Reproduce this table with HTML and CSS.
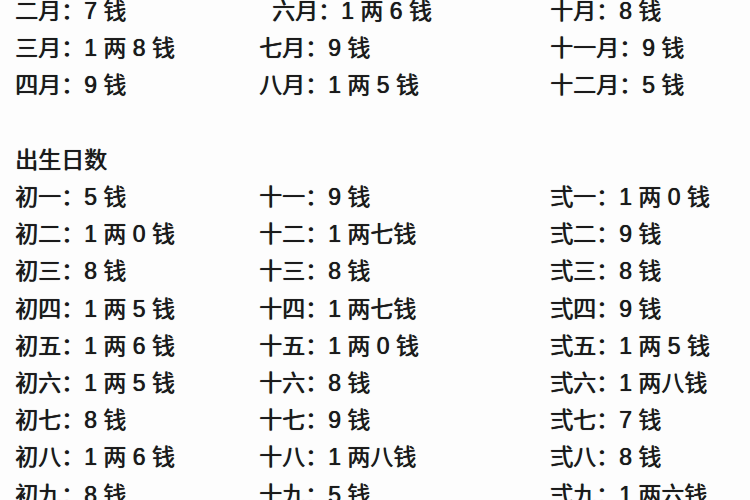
FILE: index.html
```html
<!DOCTYPE html>
<html lang="zh-CN">
<head>
<meta charset="utf-8">
<title>月份与日数</title>
<link rel="stylesheet" href="styles.css">
</head>
<body>
<div class="page">
  <div class="table">
    <div class="cell">二月：7 钱</div>
    <div class="cell indent">六月：1 两 6 钱</div>
    <div class="cell">十月：8 钱</div>
    <div class="cell">三月：1 两 8 钱</div>
    <div class="cell">七月：9 钱</div>
    <div class="cell">十一月：9 钱</div>
    <div class="cell">四月：9 钱</div>
    <div class="cell">八月：1 两 5 钱</div>
    <div class="cell">十二月：5 钱</div>
  </div>
  <div class="spacer"></div>
  <div class="heading">出生日数</div>
  <div class="table">
    <div class="cell">初一：5 钱</div>
    <div class="cell">十一：9 钱</div>
    <div class="cell">弍一：1 两 0 钱</div>
    <div class="cell">初二：1 两 0 钱</div>
    <div class="cell">十二：1 两七钱</div>
    <div class="cell">弍二：9 钱</div>
    <div class="cell">初三：8 钱</div>
    <div class="cell">十三：8 钱</div>
    <div class="cell">弍三：8 钱</div>
    <div class="cell">初四：1 两 5 钱</div>
    <div class="cell">十四：1 两七钱</div>
    <div class="cell">弍四：9 钱</div>
    <div class="cell">初五：1 两 6 钱</div>
    <div class="cell">十五：1 两 0 钱</div>
    <div class="cell">弍五：1 两 5 钱</div>
    <div class="cell">初六：1 两 5 钱</div>
    <div class="cell">十六：8 钱</div>
    <div class="cell">弍六：1 两八钱</div>
    <div class="cell">初七：8 钱</div>
    <div class="cell">十七：9 钱</div>
    <div class="cell">弍七：7 钱</div>
    <div class="cell">初八：1 两 6 钱</div>
    <div class="cell">十八：1 两八钱</div>
    <div class="cell">弍八：8 钱</div>
    <div class="cell">初九：8 钱</div>
    <div class="cell">十九：5 钱</div>
    <div class="cell">弍九：1 两六钱</div>
  </div>
</div>
</body>
</html>
```
FILE: styles.css
```css
html, body {
  margin: 0;
  padding: 0;
  background: #fdfdfd;
  overflow: hidden;
}
.page {
  width: 750px;
  height: 500px;
  overflow: hidden;
  font-family: "Liberation Sans", "Noto Sans CJK SC", sans-serif;
  font-size: 23px;
  line-height: 37.2px;
  color: #1a1a1a;
  text-shadow: 0.4px 0 0 #1a1a1a, 0 0 1px rgba(0, 0, 0, 0.45);
  padding-left: 15px;
  box-sizing: border-box;
}
.table {
  display: grid;
  grid-template-columns: 244px 291px 1fr;
}
.table:first-child {
  margin-top: -7px;
}
.cell {
  white-space: nowrap;
}
.indent {
  padding-left: 13px;
}
.spacer {
  height: 37.2px;
}
.heading {
  height: 37.2px;
}
```
